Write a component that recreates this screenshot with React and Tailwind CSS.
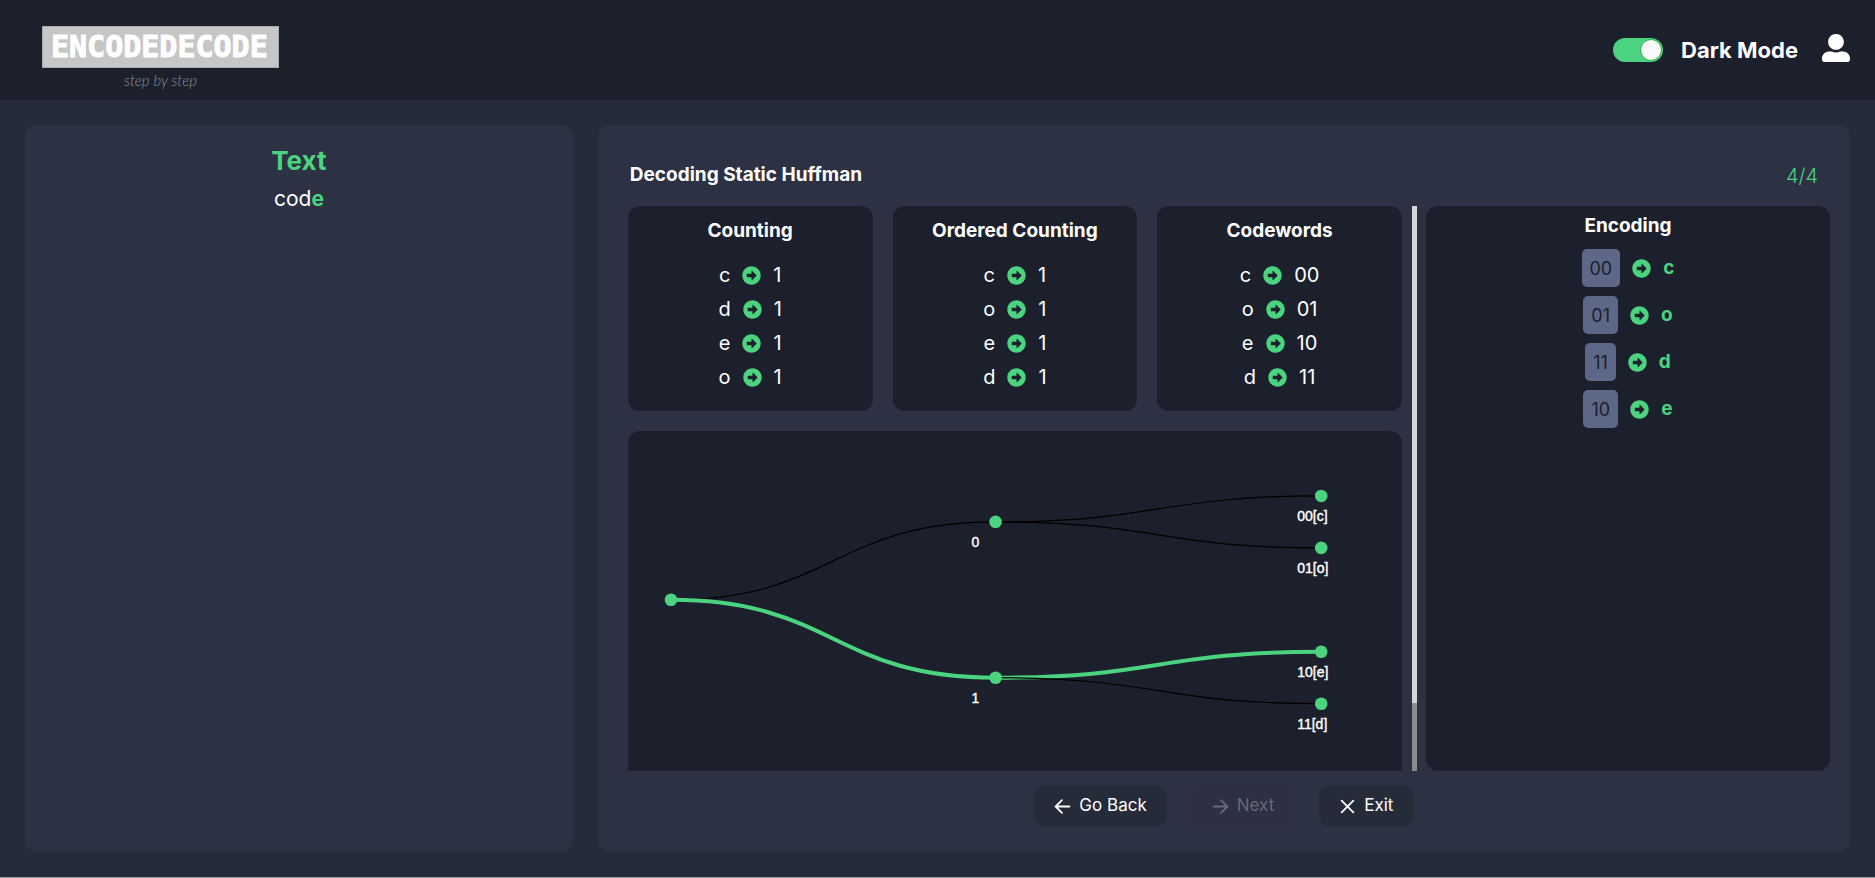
import { FaArrowAltCircleRight, FaUserAlt } from "react-icons/fa";

const HEADING = "text-center text-[19px] leading-6 font-bold text-white";

function ArrowIcon() {
  return <FaArrowAltCircleRight className="size-[19px] shrink-0 text-[#4bd37f]" aria-hidden="true" />;
}

function Logo() {
  return (
    <a href="#home" className="flex flex-col items-center pt-[18px]" aria-label="EncodeDecode step by step">
      <span className="flex h-[42px] w-[237px] items-center border border-[#a9aab0] bg-[#c6c6c6] pl-2 font-['DejaVu_Sans_Mono',monospace] text-[30px] leading-none font-bold text-white [-webkit-text-stroke:1px_white]">
        ENCODEDECODE
      </span>
      <span className="font-['Lato',sans-serif] text-[15px] leading-6 font-light text-[#8b8d94] italic">step by step</span>
    </a>
  );
}

const tables = [
  { title: "Counting", rows: [["c", "1"], ["d", "1"], ["e", "1"], ["o", "1"]] },
  { title: "Ordered Counting", rows: [["c", "1"], ["o", "1"], ["e", "1"], ["d", "1"]] },
  { title: "Codewords", rows: [["c", "00"], ["o", "01"], ["e", "10"], ["d", "11"]] },
];

const encoding = [["00", "c"], ["01", "o"], ["11", "d"], ["10", "e"]];

const nodes = [
  { x: 43, y: 169, label: "" },
  { x: 368, y: 91, label: "0" },
  { x: 368, y: 247, label: "1" },
  { x: 694, y: 65, label: "00[c]" },
  { x: 694, y: 117, label: "01[o]" },
  { x: 694, y: 221, label: "10[e]" },
  { x: 694, y: 273, label: "11[d]" },
];

const links = [
  { from: 0, to: 1 },
  { from: 0, to: 2, active: true },
  { from: 1, to: 3 },
  { from: 1, to: 4 },
  { from: 2, to: 5, active: true },
  { from: 2, to: 6 },
];

function linkPath({ from, to }) {
  const a = nodes[from];
  const b = nodes[to];
  const mid = (a.x + b.x) / 2;
  return `M${a.x},${a.y} C${mid},${a.y} ${mid},${b.y} ${b.x},${b.y}`;
}

function Tree() {
  return (
    <svg viewBox="0 0 775 420" className="block w-full" role="img" aria-label="Huffman tree">
      {links.map((l) => (
        <path
          key={`${l.from}-${l.to}`}
          d={linkPath(l)}
          fill="none"
          stroke={l.active ? "#4bd37f" : "#000"}
          strokeWidth={l.active ? 4 : 1.2}
        />
      ))}
      {nodes.map((n) => (
        <g key={`${n.x}-${n.y}`}>
          <circle cx={n.x} cy={n.y} r="6.3" fill="#4bd37f" />
          <text
            x={n.x - 24}
            y={n.y + 25}
            className="fill-white stroke-white stroke-[0.4px] font-['Liberation_Sans',sans-serif] text-[14px]"
          >
            {n.label}
          </text>
        </g>
      ))}
    </svg>
  );
}

const BUTTON =
  "flex h-[42px] items-center gap-2 rounded-xl bg-[#262b3a] px-5 text-[17px] text-white disabled:bg-[#2c3042] disabled:text-[#666978]";

function StrokeIcon({ d }) {
  return (
    <svg viewBox="0 0 16 16" className="size-[17px]" fill="none" stroke="currentColor" strokeWidth="1.7" strokeLinecap="round" aria-hidden="true">
      <path d={d} />
    </svg>
  );
}

export default function App() {
  return (
    <div className="flex min-h-screen flex-col border-b border-[#9a9ca3] bg-[#262b3a] font-['Inter',sans-serif] text-white">
      <header className="flex h-[100px] items-center justify-between bg-[#1c202c] pr-[25px] pl-[42px]">
        <Logo />
        <div className="flex items-center gap-6">
          <label className="flex items-center gap-[18px] text-[22px] font-bold">
            <input type="checkbox" role="switch" defaultChecked className="peer sr-only" />
            <span className="flex h-6 w-[50px] items-center justify-end rounded-full bg-[#4bd37f] p-px">
              <span className="size-[22px] rounded-full border border-[#2cb03c] bg-[#fafafa]" />
            </span>
            Dark Mode
          </label>
          <button type="button" aria-label="Account" className="pb-1">
            <FaUserAlt className="size-7" />
          </button>
        </div>
      </header>

      <main className="grid grow grid-cols-[7fr_16fr] gap-[25px] p-[25px]">
        <section className="rounded-xl bg-[#2c3143] pt-5 text-center">
          <h1 className="text-[26px] leading-8 font-bold text-[#4bd37f]">Text</h1>
          <p className="mt-2 text-[21px] leading-7">
            cod<strong className="font-bold text-[#4bd37f]">e</strong>
          </p>
        </section>

        <section className="flex flex-col rounded-xl bg-[#2c3143] p-5 pb-[25px]">
          <div className="flex h-[61px] items-center justify-between px-3">
            <h2 className="text-[19px] font-bold">Decoding Static Huffman</h2>
            <span className="text-[20px] font-light text-[#4bd37f]">4/4</span>
          </div>

          <div className="grid grid-cols-[2fr_1fr]">
            <div className="flex h-[565px] gap-[10px] pr-[9px] pl-[10px]">
              <div className="min-w-0 grow overflow-hidden">
                <div className="grid grid-cols-3 gap-5">
                  {tables.map((t) => (
                    <article key={t.title} className="h-[205px] rounded-xl bg-[#1c202c] pt-[13px]">
                      <h3 className={HEADING}>{t.title}</h3>
                      <ul className="mt-[15px]">
                        {t.rows.map(([a, b]) => (
                          <li key={a} className="flex h-[34px] items-center justify-center gap-3 text-[20px]">
                            <span>{a}</span>
                            <ArrowIcon />
                            <span>{b}</span>
                          </li>
                        ))}
                      </ul>
                    </article>
                  ))}
                </div>
                <div className="mt-5 rounded-xl bg-[#1c202c]">
                  <Tree />
                </div>
              </div>
              <div className="w-[5px] shrink-0 bg-[#8c8c8c]">
                <div className="h-[88%] bg-[#d6d6d6]" />
              </div>
            </div>

            <article className="rounded-xl bg-[#1c202c] pt-2">
              <h3 className={HEADING}>Encoding</h3>
              <ul className="mt-[11px] flex flex-col gap-[9px]">
                {encoding.map(([code, letter]) => (
                  <li key={code} className="flex items-center justify-center gap-3">
                    <span className="flex h-[38px] items-center rounded-[5px] bg-[#5d6787] px-2 text-[18px] text-[#1c202c]">{code}</span>
                    <ArrowIcon />
                    <strong className="text-[19px] font-bold text-[#4bd37f]">{letter}</strong>
                  </li>
                ))}
              </ul>
            </article>
          </div>

          <div className="mt-[14px] flex justify-center gap-[25px]">
            <button type="button" className={BUTTON}>
              <StrokeIcon d="M14.5 8H2M7.5 2L1.5 8l6 6" />
              Go Back
            </button>
            <button type="button" disabled className={BUTTON}>
              <StrokeIcon d="M1.5 8H14M8.5 2l6 6-6 6" />
              Next
            </button>
            <button type="button" className={BUTTON}>
              <StrokeIcon d="M2.5 2.5l11 11M13.5 2.5l-11 11" />
              Exit
            </button>
          </div>
        </section>
      </main>
    </div>
  );
}
